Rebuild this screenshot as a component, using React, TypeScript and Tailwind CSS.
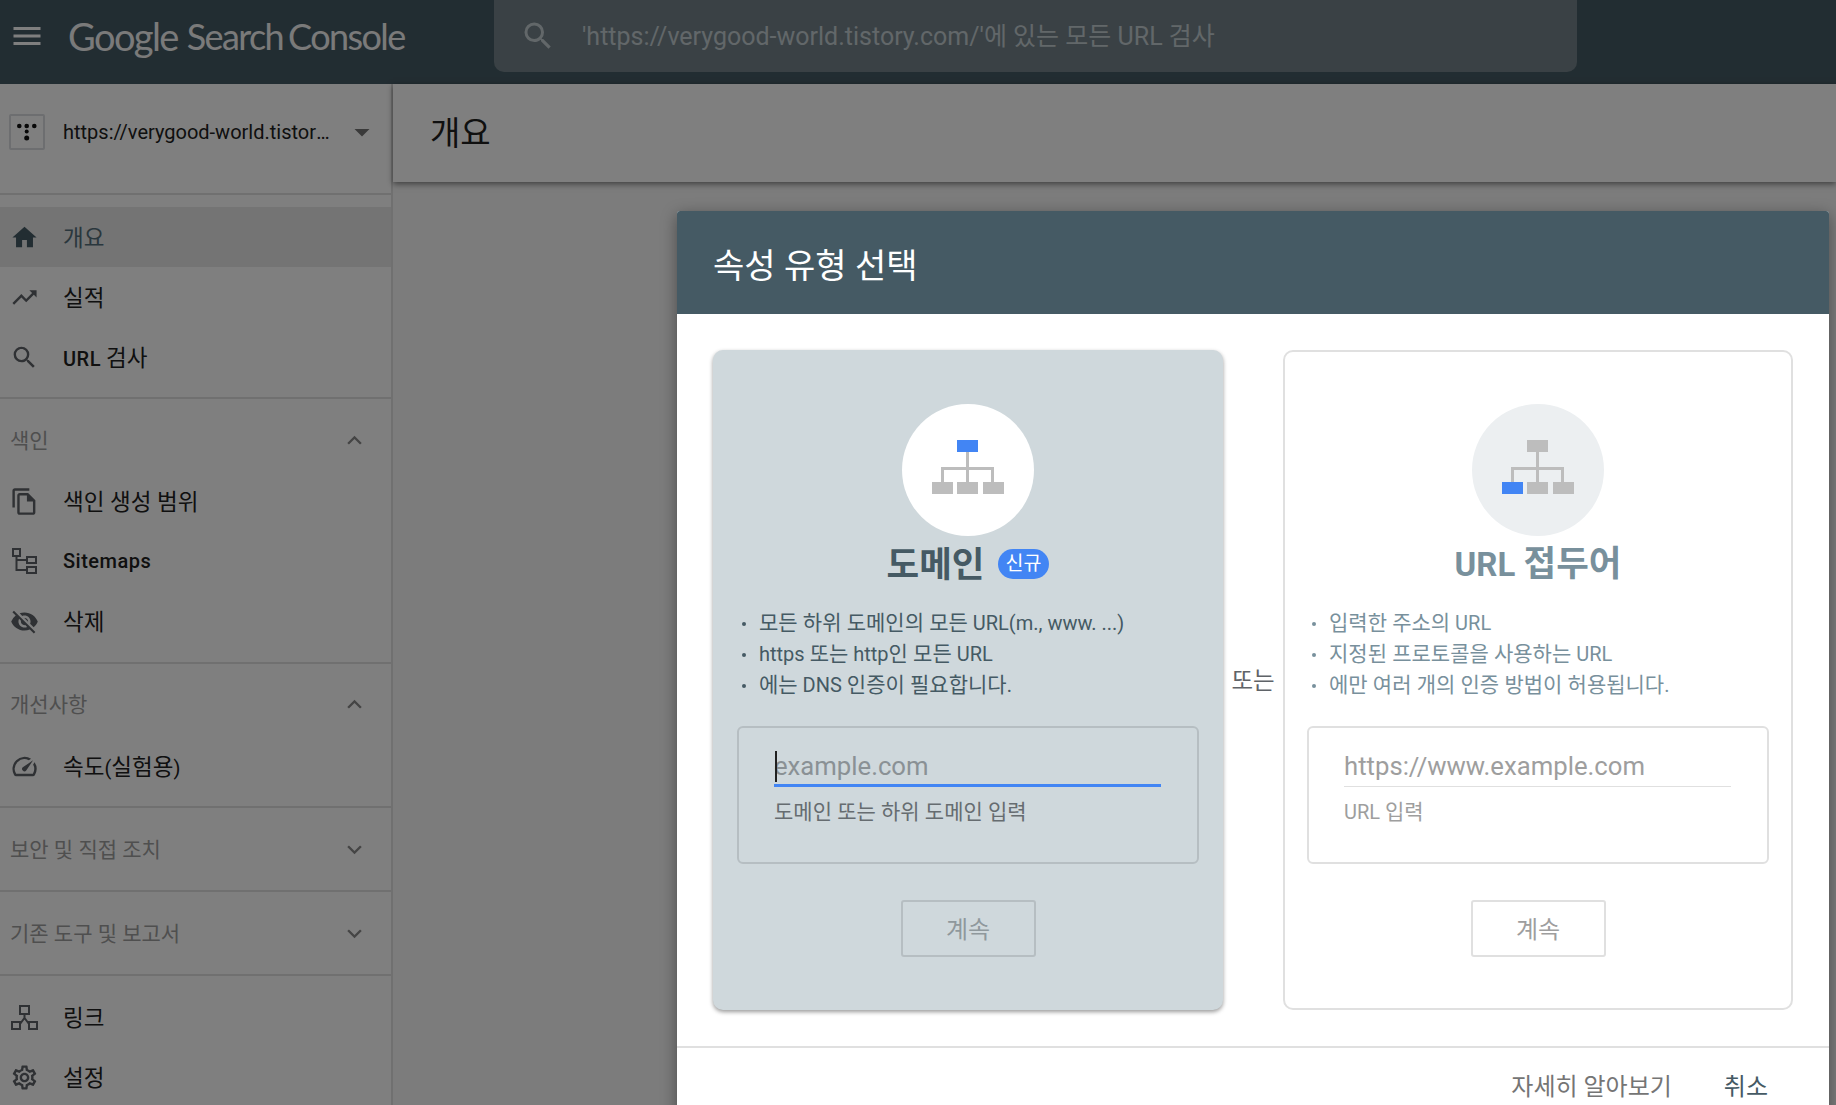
import { ReactNode } from "react";
import {
  MdArrowDropDown,
  MdExpandLess,
  MdExpandMore,
  MdHome,
  MdMenu,
  MdOutlineFileCopy,
  MdOutlineSettings,
  MdOutlineSpeed,
  MdSearch,
  MdTrendingUp,
  MdVisibilityOff,
} from "react-icons/md";

// Hangul runs sit a bit larger than the latin text around them
const Ko = ({ text, className = "text-[1.125em]" }: { text: string; className?: string }) => (
  <>
    {text.split(/([\uAC00-\uD7A3]+(?: [\uAC00-\uD7A3]+)*)/).map((part, i) =>
      i % 2 === 1 ? (
        <span key={i} className={className}>
          {part}
        </span>
      ) : (
        part
      )
    )}
  </>
);

const TistoryIcon = () => (
  <svg viewBox="0 0 32 32" className="w-[32px] h-[32px]" fill="#111">
    <circle cx="8.300" cy="10" r="2.300" />
    <circle cx="15.700" cy="10" r="2.300" />
    <circle cx="23.300" cy="10" r="2.300" />
    <circle cx="15.700" cy="15.500" r="2" />
    <circle cx="15.700" cy="22" r="2.500" />
  </svg>
);

const SitemapIcon = () => (
  <svg viewBox="0 0 29 29" className="w-[29px] h-[29px]" fill="none" stroke="currentColor" strokeWidth="2">
    <rect x="3" y="2" width="7" height="7" />
    <rect x="17" y="10" width="9" height="6" />
    <rect x="17" y="20" width="9" height="6" />
    <path d="M6.500 9v14H17M6.500 13H17" />
  </svg>
);

const LinkNodesIcon = () => (
  <svg viewBox="0 0 29 29" className="w-[29px] h-[29px]" fill="none" stroke="currentColor" strokeWidth="2">
    <rect x="10" y="3" width="9" height="8" />
    <rect x="2" y="19" width="8" height="7" />
    <rect x="19" y="19" width="8" height="7" />
    <path d="M14.500 11v4M10 21l4.500-6L19 21" />
  </svg>
);

const HierarchyIcon = ({ active }: { active: "top" | "left" }) => (
  <svg viewBox="0 0 72 54" className="w-[72px] h-[54px]">
    <path d="M35.500 12v30M10.500 42V28.500h50V42" fill="none" stroke="#bdbdbd" strokeWidth="3" />
    <rect x="25" y="0" width="21" height="12" fill={active === "top" ? "#4285f4" : "#bdbdbd"} />
    <rect x="0" y="42" width="21" height="12" fill={active === "left" ? "#4285f4" : "#bdbdbd"} />
    <rect x="25" y="42" width="21" height="12" fill="#bdbdbd" />
    <rect x="51" y="42" width="21" height="12" fill="#bdbdbd" />
  </svg>
);

const NavRow = ({ icon, label, active }: { icon: ReactNode; label: ReactNode; active?: boolean }) => (
  <div className={`flex items-center h-[60px] pl-[10px] gap-[24px] ${active ? "bg-[#e8e8e8] text-[#455a64]" : "text-[#5f6368]"}`}>
    <span className="w-[29px] h-[29px] shrink-0 flex items-center justify-center text-[29px]">{icon}</span>
    <span className={`text-[20px] leading-[28px] pt-[2px] ${active ? "text-[#546e7a]" : "text-[#212121]"}`}>{label}</span>
  </div>
);

const SectionHead = ({ label, open, className }: { label: string; open?: boolean; className: string }) => (
  <div className={`flex items-center justify-between pl-[10px] pr-[22px] text-[#9e9e9e] ${className}`}>
    <span className="text-[21px] pt-[4px]">{label}</span>
    <span className="text-[29px] leading-none text-[#8a8a8a]">{open ? <MdExpandLess /> : <MdExpandMore />}</span>
  </div>
);

const Sidebar = () => (
  <aside className="w-[393px] shrink-0 bg-white border-r-2 border-[#e0e0e0]">
    <div className="h-[111px] flex items-center pl-[9px] pb-[13px] border-b-2 border-[#e0e0e0]">
      <div className="w-[36px] h-[36px] shrink-0 rounded-[2px] border-2 border-[#dadce0] flex items-center justify-center">
        <TistoryIcon />
      </div>
      <span className="ml-[18px] w-[269px] text-[20px] text-[#212121] truncate">https://verygood-world.tistory.com/</span>
      <span className="ml-[12px] text-[36px] leading-none text-[#757575]"><MdArrowDropDown /></span>
    </div>
    <div className="pt-[12px] pb-[10px] border-b-2 border-[#e0e0e0]">
      <NavRow active icon={<MdHome />} label={<Ko text="개요" />} />
      <NavRow icon={<MdTrendingUp />} label={<Ko text="실적" />} />
      <NavRow icon={<MdSearch />} label={<><span className="font-medium tracking-[0.5px]">URL</span> <Ko text="검사" /></>} />
    </div>
    <div className="pb-[11px] border-b-2 border-[#e0e0e0]">
      <SectionHead open label="색인" className="h-[72px] pt-[10px]" />
      <NavRow icon={<MdOutlineFileCopy />} label={<Ko text="색인 생성 범위" />} />
      <NavRow icon={<SitemapIcon />} label={<span className="inline-block pb-[2px] font-medium tracking-[0.5px]">Sitemaps</span>} />
      <NavRow icon={<MdVisibilityOff />} label={<Ko text="삭제" />} />
    </div>
    <div className="pb-[10px] border-b-2 border-[#e0e0e0]">
      <SectionHead open label="개선사항" className="h-[72px] pt-[8px]" />
      <NavRow icon={<MdOutlineSpeed />} label={<Ko text="속도(실험용)" />} />
    </div>
    <div className="border-b-2 border-[#e0e0e0]">
      <SectionHead label="보안 및 직접 조치" className="h-[82px]" />
    </div>
    <div className="border-b-2 border-[#e0e0e0]">
      <SectionHead label="기존 도구 및 보고서" className="h-[82px]" />
    </div>
    <div className="pt-[11px]">
      <NavRow icon={<LinkNodesIcon />} label={<Ko text="링크" />} />
      <NavRow icon={<MdOutlineSettings />} label={<Ko text="설정" />} />
    </div>
  </aside>
);

const PropertyCard = ({
  selected,
  title,
  badge,
  bullets,
  placeholder,
  helper,
}: {
  selected?: boolean;
  title: string;
  badge?: string;
  bullets: string[];
  placeholder: string;
  helper: string;
}) => (
  <div
    className={`h-[660px] w-[510px] rounded-[10px] flex flex-col items-center ${
      selected ? "bg-[#cfd8dc] shadow-[0_2px_4px_rgba(0,0,0,0.4)] pt-[54px] px-[24px]" : "bg-white border-2 border-[#e0e0e0] pt-[52px] px-[22px]"
    }`}
  >
    <div className={`w-[132px] h-[132px] pb-[6px] rounded-full flex items-center justify-center shrink-0 ${selected ? "bg-white" : "bg-[#eceff1]"}`}>
      <HierarchyIcon active={selected ? "top" : "left"} />
    </div>
    <div className="h-[56px] flex items-center gap-[13px]">
      <span className={`text-[33px] leading-[40px] font-bold ${selected ? "pt-[2px] text-[#455a64]" : "text-[#78909c]"}`}>
        <Ko text={title} className="text-[1.075em]" />
      </span>
      {badge && <span className="h-[30px] px-[8px] rounded-full bg-[#4285f4] text-white text-[19.500px] flex items-center">{badge}</span>}
    </div>
    <ul className={`w-full mt-[16px] pl-[5px] text-[20px] leading-[31px] ${selected ? "text-[#455a64]" : "text-[#78909c]"}`}>
      {bullets.map((item) => (
        <li key={item} className="flex items-center gap-[13px]">
          <span className={`w-[4px] h-[4px] rounded-full shrink-0 ${selected ? "bg-[#455a64]" : "bg-[#78909c]"}`} />
          <span>
            <Ko text={item} className="text-[1.05em]" />
          </span>
        </li>
      ))}
    </ul>
    <div
      className={`w-[462px] h-[138px] mt-[25px] shrink-0 rounded-[6px] border-2 pt-[21px] pl-[35px] ${
        selected ? "pr-[36px] border-[#b6bec2]" : "pr-[36px] border-[#e0e0e0]"
      }`}
    >
      <div className={`relative h-[38px] text-[25.700px] leading-[34px] ${selected ? "border-b-[3px] border-[#4285f4] text-[#8a9195]" : "border-b border-[#e0e0e0] text-[#9e9e9e]"}`}>
        {selected && <span className="absolute left-[1px] top-[2px] w-[2px] h-[31px] bg-[#212121]" />}
        {placeholder}
      </div>
      <div className={`mt-[10px] text-[20px] ${selected ? "text-[#666c70]" : "text-[#9e9e9e]"}`}>
        <Ko text={helper} className="text-[1.05em]" />
      </div>
    </div>
    <div
      className={`w-[135px] h-[57px] mt-[36px] pt-[2px] shrink-0 rounded-[3px] border-2 flex items-center justify-center text-[24px] ${
        selected ? "border-[#b6bec2] text-[#8f989c]" : "border-[#e0e0e0] text-[#9e9e9e]"
      }`}
    >
      계속
    </div>
  </div>
);

export default function App() {
  return (
    <div className="relative h-screen overflow-hidden bg-[#f8f8f8] font-['Roboto','Noto_Sans_CJK_KR',sans-serif]">
      <header className="h-[84px] bg-[#455a64] flex items-start text-white">
        <span className="w-[48px] h-[72px] pl-[9px] text-[36px] shrink-0 flex items-center"><MdMenu /></span>
        <span className="ml-[20px] w-[426px] h-[72px] shrink-0 flex items-center text-[#f5f5f5] font-['Lato','Roboto',sans-serif]">
          <span className="text-[38px] tracking-[-1.600px]">Google</span>
          <span className="ml-[9px] text-[36px] tracking-[-1.600px]">Search</span>
          <span className="ml-[5px] text-[36px] tracking-[-1.600px]">Console</span>
        </span>
        <div className="w-[1083px] h-[72px] rounded-b-[10px] bg-[#74838a] flex items-center pl-[26px] text-[#c4ced3]">
          <span className="text-[36px]"><MdSearch /></span>
          <span className="ml-[26px] pt-[2px] text-[25px]">'https://verygood-world.tistory.com/'에 있는 모든 URL 검사</span>
        </div>
      </header>
      <div className="flex h-[1021px]">
        <Sidebar />
        <main className="flex-1 bg-[#f8f8f8]">
          <div className="h-[98px] bg-white shadow-[0_2px_6px_rgba(0,0,0,0.5)] flex items-center pl-[37px] pt-[2px] text-[33px] text-[#212121]">개요</div>
        </main>
      </div>
      <div className="absolute inset-0 bg-black/50 pl-[677px] pt-[211px]">
        <div className="w-[1152px] rounded-t-[3px] bg-white shadow-[0_4px_16px_rgba(0,0,0,0.4)]">
          <div className="h-[103px] rounded-t-[3px] bg-[#455a64] flex items-center pl-[36px] pt-[8px] text-[34px] text-white">속성 유형 선택</div>
          <div className="flex items-center pt-[36px] pb-[36px] pl-[36px]">
            <PropertyCard
              selected
              title="도메인"
              badge="신규"
              bullets={["모든 하위 도메인의 모든 URL(m., www. ...)", "https 또는 http인 모든 URL", "에는 DNS 인증이 필요합니다."]}
              placeholder="example.com"
              helper="도메인 또는 하위 도메인 입력"
            />
            <div className="w-[60px] pt-[3px] text-center text-[23.500px] text-[#5f6368]">또는</div>
            <PropertyCard
              title="URL 접두어"
              bullets={["입력한 주소의 URL", "지정된 프로토콜을 사용하는 URL", "에만 여러 개의 인증 방법이 허용됩니다."]}
              placeholder="https://www.example.com"
              helper="URL 입력"
            />
          </div>
          <div className="h-[80px] border-t-2 border-[#e0e0e0] flex items-center justify-end gap-[52px] pr-[61px] text-[24px]">
            <span className="text-[#757575]">자세히 알아보기</span>
            <span className="text-[#455a64]">취소</span>
          </div>
        </div>
      </div>
    </div>
  );
}
